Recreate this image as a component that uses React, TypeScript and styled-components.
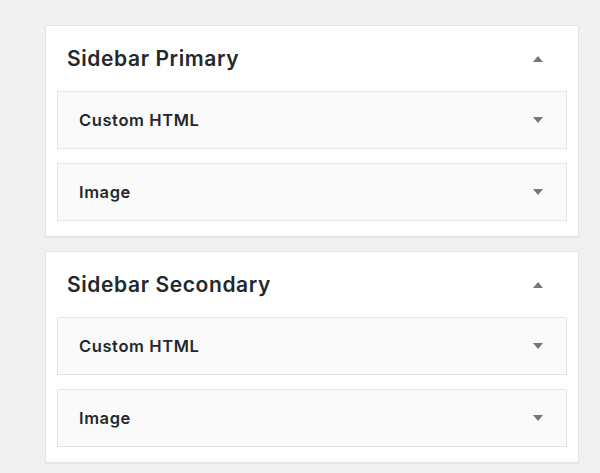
import React from "react";
import styled, { createGlobalStyle } from "styled-components";

const sidebars = [
  { name: "Sidebar Primary", widgets: ["Custom HTML", "Image"] },
  { name: "Sidebar Secondary", widgets: ["Custom HTML", "Image"] },
];

export default function App() {
  return (
    <>
      <GlobalStyle />
      <Page>
        {sidebars.map((sidebar) => (
          <Holder key={sidebar.name}>
            <SidebarName>
              <h2>{sidebar.name}</h2>
              <Arrow $up />
            </SidebarName>
            <WidgetList>
              {sidebar.widgets.map((widget) => (
                <WidgetTop key={widget}>
                  <h3>{widget}</h3>
                  <Arrow />
                </WidgetTop>
              ))}
            </WidgetList>
          </Holder>
        ))}
      </Page>
    </>
  );
}

const GlobalStyle = createGlobalStyle`
  html, body {
    margin: 0;
    background: #f1f1f1;
  }

  body {
    font-family: Inter, "Noto Sans", sans-serif;
    color: #23282d;
  }
`;

const Page = styled.main`
  display: flex;
  flex-direction: column;
  gap: 14px;
  width: 534px;
  padding: 25px 0 12px 45px;
`;

const Holder = styled.section`
  background: #fff;
  border: 1px solid #e5e5e5;
  box-shadow: 0 1px 1px rgba(0, 0, 0, 0.04);
`;

const SidebarName = styled.div`
  display: flex;
  align-items: center;
  justify-content: space-between;
  height: 65px;
  padding: 0 35px 0 21px;

  h2 {
    margin: 0;
    font-size: 21px;
    font-weight: 600;
    letter-spacing: 0.6px;
  }
`;

const WidgetList = styled.div`
  display: flex;
  flex-direction: column;
  gap: 14px;
  padding: 0 11px 15px;
`;

const WidgetTop = styled.div`
  display: flex;
  align-items: center;
  justify-content: space-between;
  height: 56px;
  padding: 0 23px 0 21px;
  background: #fafafa;
  border: 1px solid #e5e5e5;

  h3 {
    margin: 0;
    font-size: 16.5px;
    font-weight: 600;
    letter-spacing: 0.6px;
  }
`;

const Arrow = styled.span<{ $up?: boolean }>`
  width: 0;
  height: 0;
  border-left: 5px solid transparent;
  border-right: 5px solid transparent;
  ${({ $up }) =>
    $up ? "border-bottom: 6px solid #72777c;" : "border-top: 6px solid #72777c;"}
`;
